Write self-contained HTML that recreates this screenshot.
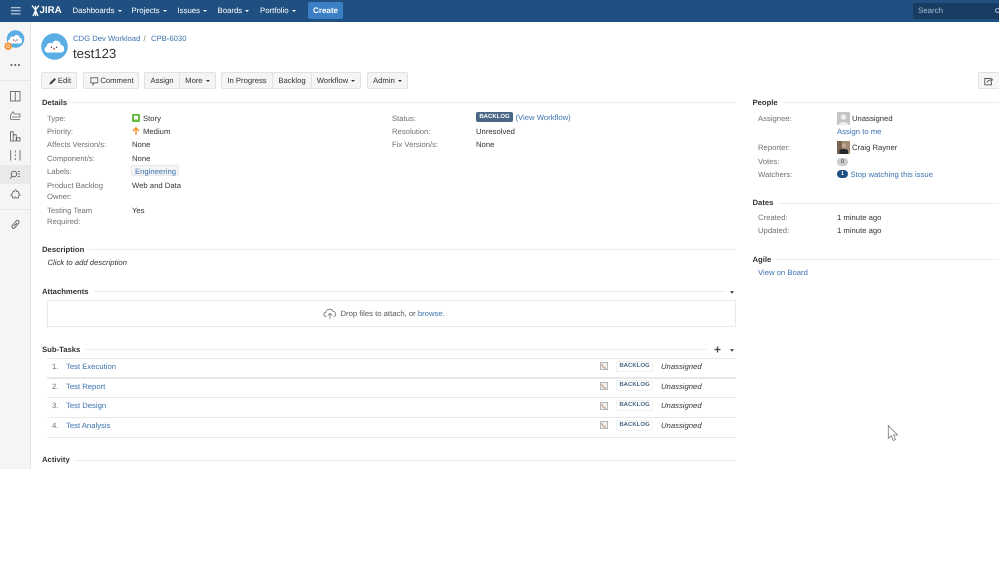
<!DOCTYPE html>
<html><head><meta charset="utf-8">
<style>
html,body{margin:0;padding:0;background:#fff;}
body{width:999px;height:561px;position:relative;overflow:hidden;font-family:"Liberation Sans",sans-serif;font-size:7.7px;color:#333;text-rendering:geometricPrecision;}
#w{position:absolute;inset:0;filter:blur(.3px);}
.t{position:absolute;white-space:nowrap;line-height:12px;margin-top:.6px;}
.g{color:#707070}
.a{color:#3b73af}
.h{font-weight:bold;color:#333;background:#fff;padding-right:5px;}
.n{color:#fff;font-size:7.8px;top:4px;}
.r{position:absolute;height:1px;background:#ededed;}
.b{position:absolute;top:72px;height:17px;box-sizing:border-box;background:#f5f5f5;border:1px solid #e2e2e2;border-radius:2px;line-height:15px;text-align:center;color:#333;white-space:nowrap;font-size:7.7px;}
.c{display:inline-block;width:0;height:0;border-left:2px solid transparent;border-right:2px solid transparent;border-top:2px solid currentColor;vertical-align:middle;margin-left:1px;}
.s{position:absolute;left:616px;width:37px;height:11px;box-sizing:border-box;border:1px solid #f0f0f0;border-radius:2px;color:#4a6785;font-weight:bold;font-size:6px;line-height:9px;text-align:center;background:#fff;}
svg{position:absolute;overflow:visible}
</style></head><body><div id="w">

<!-- top bar -->
<div style="position:absolute;left:0;top:0;width:999px;height:22px;background:#205081"></div>
<div style="position:absolute;left:913px;top:3px;width:86px;height:16px;background:#183c62;border-radius:2px 0 0 2px"></div>
<svg style="left:11px;top:7px" width="10" height="8"><path d="M0 .7H9.500M0 3.800H9.500M0 6.900H9.500" stroke="#dfe8f1" stroke-width="1"/></svg>
<svg style="left:31px;top:4px" width="10" height="13" viewBox="0 0 10 13"><path d="M1 1.500L4.500 6L8 1.500M4.500 2V12M2 12L4.500 6.500L7 12" stroke="#fff" stroke-width="1.300" fill="none"/></svg>
<span class="t" style="left:39.500px;top:4.500px;font-weight:bold;font-size:9.700px;color:#fff">JIRA</span>
<span class="t n" style="left:72.500px">Dashboards <i class="c"></i></span>
<span class="t n" style="left:131.500px">Projects <i class="c"></i></span>
<span class="t n" style="left:177.500px">Issues <i class="c"></i></span>
<span class="t n" style="left:217.500px">Boards <i class="c"></i></span>
<span class="t n" style="left:260px">Portfolio <i class="c"></i></span>
<div style="position:absolute;left:308px;top:2px;width:35px;height:17px;background:#3b7fc4;border-radius:2px;color:#fff;font-weight:bold;font-size:8px;line-height:17px;text-align:center">Create</div>
<span class="t" style="left:918px;top:4px;color:#a9bdd2;font-size:7.900px">Search</span>
<div style="position:absolute;left:995px;top:8px;width:5px;height:5px;border:1px solid #a9bdd2;border-radius:50%;box-sizing:border-box"></div>

<!-- sidebar -->
<div style="position:absolute;left:0;top:22px;width:30px;height:447px;background:#f5f5f5;border-right:1px solid #e4e4e4;box-sizing:content-box"></div>
<div style="position:absolute;left:0;top:80px;width:30px;height:1px;background:#e6e6e6"></div>
<div style="position:absolute;left:0;top:209px;width:30px;height:1px;background:#e6e6e6"></div>
<div style="position:absolute;left:0;top:165px;width:30px;height:19px;background:#e9e9e9"></div>
<svg style="left:6px;top:30px" width="19" height="19" viewBox="0 0 19 19">
<circle cx="9.500" cy="9" r="8.800" fill="#5aaee3"/>
<path d="M3.500 13.500C1.300 13.500 1.300 9.800 3.800 9.500C3.800 7 6.500 5.500 7.800 7C8.800 4 13.500 4.500 13.800 8C16.700 8 16.700 13.500 14.200 13.500Z" fill="#fff"/>
<circle cx="7.500" cy="10" r=".6" fill="#333"/><circle cx="11" cy="10" r=".6" fill="#333"/><circle cx="9.200" cy="11" r=".6" fill="#e0483e"/></svg>
<svg style="left:4px;top:41.500px" width="9" height="9"><circle cx="4.200" cy="4.200" r="3.800" fill="#f6923c"/><circle cx="4.200" cy="4.200" r="1.500" fill="none" stroke="#fdd7ac" stroke-width=".8"/></svg>
<svg style="left:10px;top:63px" width="11" height="4"><circle cx="1.500" cy="2" r="1" fill="#555"/><circle cx="5.300" cy="2" r="1" fill="#555"/><circle cx="9" cy="2" r="1" fill="#555"/></svg>
<svg style="left:10px;top:91px" width="11" height="11" fill="none" stroke="#555" stroke-width=".8"><rect x=".5" y=".5" width="9.500" height="9.500"/><path d="M5.200 .5V10"/></svg>
<svg style="left:10px;top:111px" width="11" height="10" fill="none" stroke="#666" stroke-width=".8"><path d="M.5 8.500V4L3 .8L4.500 3H10V6H2M1 8.500H10"/></svg>
<svg style="left:10px;top:131px" width="11" height="11" fill="none" stroke="#555" stroke-width=".8"><path d="M.5 10V.8H3.200V10ZM3.200 10V3.800H6.200V10ZM6.500 10V6.800H10V10Z"/></svg>
<svg style="left:10px;top:150px" width="11" height="11" fill="none" stroke="#666" stroke-width=".9"><path d="M.7 0V10.500M10 0V10.500M5.300 .5V2.500M5.300 4.300V6.300M5.300 8V10"/></svg>
<svg style="left:10px;top:170px" width="11" height="10" fill="none" stroke="#555" stroke-width=".8"><circle cx="4" cy="4" r="2.800"/><path d="M2 6.200L.3 8.500M7.800 1.500H10M7.800 4H10M7.800 6.500H10"/></svg>
<svg style="left:10px;top:189px" width="11" height="11" fill="none" stroke="#666" stroke-width=".8"><path d="M3 2.500H4.500C4 .3 7 .3 6.500 2.500H8.500V4.500C10.500 4.200 10.500 7 8.500 6.700V9H6C6.300 7.500 4 7.500 4.300 9H2.500V7C.5 7.300 .5 4.500 2.500 4.800Z"/></svg>
<svg style="left:10px;top:219px" width="11" height="11" fill="none" stroke="#666" stroke-width="1"><path d="M4.500 4.200L3 5.700C1.800 7 1.800 8.300 2.500 9C3.300 9.700 4.500 9.300 5.300 8.300L6.500 7M6.300 6.500L8 5C9.300 3.700 9.300 2.500 8.500 1.800C7.700 1 6.500 1.500 5.700 2.500L4.500 3.700M4 7L7 4"/></svg>

<!-- header -->
<svg style="left:41px;top:33px" width="27" height="27" viewBox="0 0 27 27">
<circle cx="13.500" cy="13.500" r="13.300" fill="#5aaee3"/>
<path d="M6.500 19.500C2.800 19.500 2.800 14 5.800 13.500C5.500 10.500 9.300 8.800 11.200 10.800C12.800 5.800 19.500 7.200 19.800 12C24.200 12 24.200 19.500 20.300 19.500Z" fill="#fff"/>
<circle cx="10.500" cy="14.300" r=".7" fill="#333"/><circle cx="15.500" cy="14.300" r=".7" fill="#333"/><circle cx="13" cy="15.800" r=".9" fill="#e0483e"/></svg>
<span class="t a" style="left:73px;top:32px">CDG Dev Workload</span>
<span class="t g" style="left:143.500px;top:32px">/</span>
<span class="t a" style="left:151px;top:32px">CPB-6030</span>
<span class="t" style="left:73px;top:45px;font-size:13.200px;line-height:16px;color:#333">test123</span>

<!-- toolbar -->
<div class="b" style="left:41px;width:36px;padding-left:11px"><svg style="left:7px;top:3.500px" width="8" height="8"><path d="M.5 7.500L1 5.500L5.500 1L7 2.500L2.500 7Z" fill="#444"/></svg>Edit</div>
<div class="b" style="left:83px;width:56px;padding-left:12px"><svg style="left:6px;top:3.500px" width="9" height="9"><path d="M.8.800H7.800V5.800H4.500L3 7.800V5.800H.8Z" fill="none" stroke="#555" stroke-width=".8"/></svg>Comment</div>
<div class="b" style="left:144px;width:36px;border-radius:2px 0 0 2px">Assign</div>
<div class="b" style="left:179px;width:37px;border-radius:0 2px 2px 0">More <i class="c"></i></div>
<div class="b" style="left:221px;width:52px;border-radius:2px 0 0 2px">In Progress</div>
<div class="b" style="left:272px;width:40px;border-radius:0">Backlog</div>
<div class="b" style="left:311px;width:50px;border-radius:0 2px 2px 0">Workflow <i class="c"></i></div>
<div class="b" style="left:367px;width:41px">Admin <i class="c"></i></div>
<div class="b" style="left:978px;width:21px;border-right:0;border-radius:2px 0 0 2px"><svg style="left:5px;top:3.500px" width="10" height="9" fill="none" stroke="#555" stroke-width=".9"><path d="M6 1.500H.8V7.800H7.500V5M3 5.500C3.500 3.500 5 2.800 8 2.800M6.500 .8L8.500 2.800L6.500 4.800"/></svg></div>

<!-- Details -->
<div class="r" style="left:42px;top:102px;width:694px"></div>
<span class="t h" style="left:42px;top:96px">Details</span>
<span class="t g" style="left:47px;top:112px">Type:</span>
<span class="t g" style="left:47px;top:125px">Priority:</span>
<span class="t g" style="left:47px;top:138px">Affects Version/s:</span>
<span class="t g" style="left:47px;top:152px">Component/s:</span>
<span class="t g" style="left:47px;top:165px">Labels:</span>
<span class="t g" style="left:47px;top:179px">Product Backlog</span>
<span class="t g" style="left:47px;top:190px">Owner:</span>
<span class="t g" style="left:47px;top:204px">Testing Team</span>
<span class="t g" style="left:47px;top:215px">Required:</span>
<svg style="left:132px;top:113.500px" width="8" height="8"><rect width="8" height="8" rx="1" fill="#63ba3c"/><path d="M2 1.800H6V6.300L4 5L2 6.300Z" fill="#fff"/></svg>
<span class="t" style="left:143px;top:112px">Story</span>
<svg style="left:132px;top:126.500px" width="8" height="8"><path d="M4 7.800V1M1 4L4 .8L7 4" fill="none" stroke="#f79232" stroke-width="1.500"/></svg>
<span class="t" style="left:143px;top:125px">Medium</span>
<span class="t" style="left:132px;top:138px">None</span>
<span class="t" style="left:132px;top:152px">None</span>
<div style="position:absolute;left:131px;top:165px;width:48px;height:11px;box-sizing:border-box;background:#f5f5f5;border:1px solid #e9e9e9;border-radius:2px"></div>
<span class="t a" style="left:135px;top:165px">Engineering</span>
<span class="t" style="left:132px;top:179px">Web and Data</span>
<span class="t" style="left:132px;top:204px">Yes</span>

<span class="t g" style="left:392px;top:112px">Status:</span>
<span class="t g" style="left:392px;top:125px">Resolution:</span>
<span class="t g" style="left:392px;top:138px">Fix Version/s:</span>
<div style="position:absolute;left:476px;top:112px;width:37px;height:10px;background:#4a6785;border-radius:2px;color:#fff;font-weight:bold;font-size:6px;line-height:10px;text-align:center">BACKLOG</div>
<span class="t a" style="left:515.500px;top:111.500px">(View Workflow)</span>
<span class="t" style="left:476px;top:125px">Unresolved</span>
<span class="t" style="left:476px;top:138px">None</span>

<!-- Description -->
<div class="r" style="left:42px;top:249px;width:694px"></div>
<span class="t h" style="left:42px;top:243px;font-weight:bold">Description</span>
<span class="t" style="left:47.500px;top:256.500px;font-style:italic">Click to add description</span>

<!-- Attachments -->
<div class="r" style="left:42px;top:291px;width:683px"></div>
<span class="t h" style="left:42px;top:285px">Attachments</span>
<i class="c" style="position:absolute;left:729px;top:291px;color:#555;border-left-width:2.500px;border-right-width:2.500px;border-top-width:3px"></i>
<div style="position:absolute;left:47px;top:300px;width:689px;height:27px;box-sizing:border-box;border:1px dotted #d5d5d5"></div>
<svg style="left:323px;top:307px" width="14" height="13" fill="none" stroke="#707070" stroke-width=".8"><path d="M3.500 9.500C.2 9.500 0 5.800 2.800 5.300C3.200 2 8.500 .8 10 4.500C13.300 4.500 13.800 9.500 10.500 9.500M7 12V6.500M4.800 8.500L7 6.300L9.200 8.500"/></svg>
<span class="t" style="left:340.500px;top:307px;color:#555">Drop files to attach, or <span class="a">browse.</span></span>

<!-- Sub-tasks -->
<div class="r" style="left:42px;top:349px;width:665px"></div>
<span class="t h" style="left:42px;top:343px">Sub-Tasks</span>
<svg style="left:714px;top:346px" width="7" height="7"><path d="M3.500 .5V6.500M.5 3.500H6.500" stroke="#444" stroke-width="1.300"/></svg>
<i class="c" style="position:absolute;left:729px;top:349px;color:#555;border-left-width:2.500px;border-right-width:2.500px;border-top-width:3px"></i>
<div class="r" style="left:47px;top:358px;width:689px;background:#e8e8e8"></div>
<div class="r" style="left:47px;top:377px;width:689px;height:1.500px;background:#e8e8e8"></div>
<div class="r" style="left:47px;top:397px;width:689px;background:#e8e8e8"></div>
<div class="r" style="left:47px;top:417px;width:689px;background:#e8e8e8"></div>
<div class="r" style="left:47px;top:436.500px;width:689px;height:1.500px;background:#e8e8e8"></div>

<span class="t g" style="left:52px;top:360px">1.</span><span class="t a" style="left:66px;top:360px">Test Execution</span>
<span class="t g" style="left:52px;top:380px">2.</span><span class="t a" style="left:66px;top:380px">Test Report</span>
<span class="t g" style="left:52px;top:399.500px">3.</span><span class="t a" style="left:66px;top:399.500px">Test Design</span>
<span class="t g" style="left:52px;top:419px">4.</span><span class="t a" style="left:66px;top:419px">Test Analysis</span>

<svg style="left:600px;top:362px" width="8" height="8"><rect x=".4" y=".4" width="7.200" height="7.200" fill="#eee" stroke="#aaa" stroke-width=".8"/><path d="M1.800 2C2 4.500 4 6.300 6 6.300" fill="none" stroke="#c9a184" stroke-width="1.300"/></svg>
<svg style="left:600px;top:381.500px" width="8" height="8"><rect x=".4" y=".4" width="7.200" height="7.200" fill="#eee" stroke="#aaa" stroke-width=".8"/><path d="M1.800 2C2 4.500 4 6.300 6 6.300" fill="none" stroke="#c9a184" stroke-width="1.300"/></svg>
<svg style="left:600px;top:401.500px" width="8" height="8"><rect x=".4" y=".4" width="7.200" height="7.200" fill="#eee" stroke="#aaa" stroke-width=".8"/><path d="M1.800 2C2 4.500 4 6.300 6 6.300" fill="none" stroke="#c9a184" stroke-width="1.300"/></svg>
<svg style="left:600px;top:421px" width="8" height="8"><rect x=".4" y=".4" width="7.200" height="7.200" fill="#eee" stroke="#aaa" stroke-width=".8"/><path d="M1.800 2C2 4.500 4 6.300 6 6.300" fill="none" stroke="#c9a184" stroke-width="1.300"/></svg>
<div class="s" style="top:361px">BACKLOG</div>
<div class="s" style="top:380px">BACKLOG</div>
<div class="s" style="top:400px">BACKLOG</div>
<div class="s" style="top:419.500px">BACKLOG</div>
<span class="t" style="left:661px;top:360px;font-style:italic">Unassigned</span>
<span class="t" style="left:661px;top:380px;font-style:italic">Unassigned</span>
<span class="t" style="left:661px;top:399.500px;font-style:italic">Unassigned</span>
<span class="t" style="left:661px;top:419px;font-style:italic">Unassigned</span>

<!-- Activity -->
<div class="r" style="left:42px;top:460px;width:694px"></div>
<span class="t h" style="left:42px;top:453px">Activity</span>

<!-- People -->
<div class="r" style="left:753px;top:102px;width:246px"></div>
<span class="t h" style="left:752.500px;top:96px">People</span>
<span class="t g" style="left:758px;top:112px">Assignee:</span>
<svg style="left:837px;top:112px" width="13" height="13"><rect width="13" height="13" rx="1" fill="#c4c4c4"/><circle cx="6.500" cy="5" r="2.800" fill="#eee"/><path d="M1.500 13C2 9 11 9 11.500 13Z" fill="#eee"/></svg>
<span class="t" style="left:852px;top:112px">Unassigned</span>
<span class="t a" style="left:837px;top:125.500px">Assign to me</span>
<span class="t g" style="left:758px;top:141.500px">Reporter:</span>
<svg style="left:837px;top:141px" width="13" height="13"><rect width="13" height="13" rx="1" fill="#a08a72"/><rect width="5" height="13" fill="#7a6552"/><circle cx="7" cy="4.500" r="2.200" fill="#c9a78e"/><path d="M2.500 13V9.500C3 7.500 10.500 7.500 11 9.500V13Z" fill="#27272e"/></svg>
<span class="t" style="left:852px;top:141px">Craig Rayner</span>
<span class="t g" style="left:758px;top:155.500px">Votes:</span>
<div style="position:absolute;left:837px;top:158px;width:11px;height:8px;background:#ccc;border-radius:4px;color:#333;font-size:5.500px;line-height:8px;text-align:center">0</div>
<span class="t g" style="left:758px;top:168px">Watchers:</span>
<div style="position:absolute;left:837px;top:170px;width:11px;height:8px;background:#205081;border-radius:4px;color:#fff;font-weight:bold;font-size:5.500px;line-height:8px;text-align:center">1</div>
<span class="t a" style="left:850.500px;top:168px">Stop watching this issue</span>

<!-- Dates -->
<div class="r" style="left:753px;top:203px;width:246px"></div>
<span class="t h" style="left:752.500px;top:196.500px">Dates</span>
<span class="t g" style="left:758px;top:211px">Created:</span>
<span class="t" style="left:837px;top:211px">1 minute ago</span>
<span class="t g" style="left:758px;top:224px">Updated:</span>
<span class="t" style="left:837px;top:224px">1 minute ago</span>

<!-- Agile -->
<div class="r" style="left:753px;top:259px;width:246px"></div>
<span class="t h" style="left:752.500px;top:253px">Agile</span>
<span class="t a" style="left:758px;top:266px">View on Board</span>

<!-- cursor -->
<svg style="left:887px;top:424px" width="12" height="18" fill="#fff" stroke="#777" stroke-width=".8"><path d="M1.300 1.500V14.500L4.300 11.800L6.300 16.500L8.500 15.500L6.500 11H10.500Z"/></svg>
</div></body></html>
